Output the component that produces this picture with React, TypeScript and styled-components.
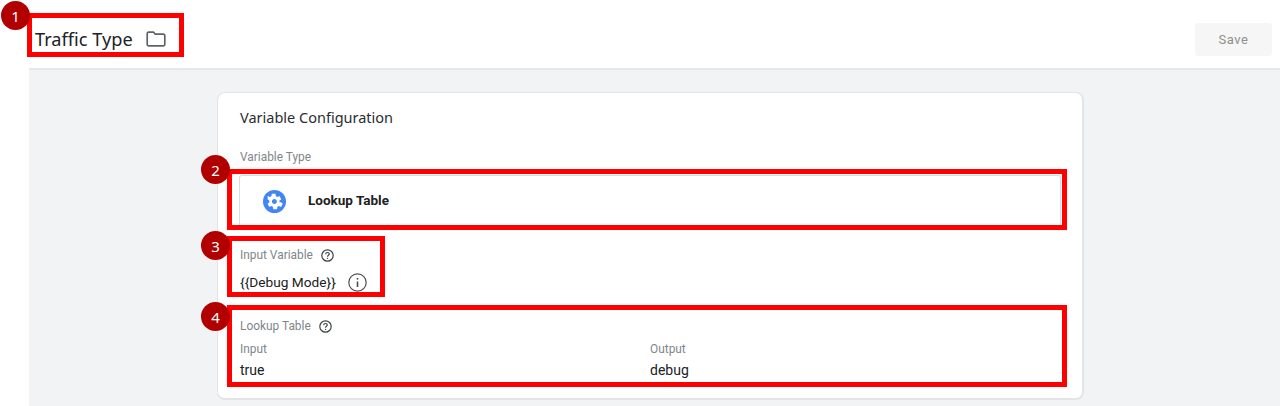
import React from 'react';
import styled, { createGlobalStyle } from 'styled-components';

const GlobalStyle = createGlobalStyle`
  html, body {
    margin: 0;
    padding: 0;
    background: #ffffff;
    font-family: Roboto, "Liberation Sans", sans-serif;
  }
`;

const Page = styled.div`
  position: relative;
  width: 1280px;
  height: 406px;
  overflow: hidden;
  background: #ffffff;
`;

const Header = styled.header`
  display: flex;
  align-items: center;
  justify-content: space-between;
  box-sizing: border-box;
  height: 70px;
  margin-left: 29px;
  padding: 10px 8px 0 6px;
  border-bottom: 2px solid #e6e7e8;
`;

const TitleGroup = styled.div`
  display: flex;
  align-items: center;
  gap: 13px;
`;

const Title = styled.h1`
  margin: 0;
  font-family: "Noto Sans", sans-serif;
  font-size: 18.2px;
  font-weight: 400;
  color: #202124;
`;

const SaveButton = styled.button`
  width: 77px;
  height: 33px;
  border: none;
  border-radius: 3px;
  background: #f6f6f6;
  color: #8f8f8f;
  font-family: Roboto, sans-serif;
  font-size: 13px;
  font-weight: 400;
  letter-spacing: 0.5px;
`;

const Content = styled.main`
  box-sizing: border-box;
  height: 336px;
  margin-left: 29px;
  padding: 22px 0 0 188px;
  background: #f1f3f4;
`;

const Card = styled.section`
  box-sizing: border-box;
  width: 867px;
  height: 308px;
  padding: 15px 21px 0 22px;
  border: 1px solid #e3e4e6;
  border-width: 1px 2px 2px 1px;
  border-radius: 8px;
  background: #ffffff;
`;

const CardTitle = styled.h2`
  margin: 0;
  font-family: "Noto Sans", sans-serif;
  font-size: 14.5px;
  line-height: 19px;
  font-weight: 400;
  color: #2b2d30;
`;

const FieldLabel = styled.div`
  display: flex;
  align-items: center;
  gap: 8px;
  font-size: 11.9px;
  line-height: 14px;
  color: #80868b;
`;

const TypeSection = styled.div`
  margin-top: 23px;
`;

const TypeRow = styled.div`
  display: flex;
  align-items: center;
  gap: 22px;
  box-sizing: border-box;
  height: 52px;
  margin: 11px 0 0 -1px;
  padding: 0 0 0 23px;
  border: 1px solid #dadce0;
  border-bottom: none;
  border-radius: 3px 3px 0 0;
`;

const TypeName = styled.span`
  margin-bottom: 3px;
  font-size: 13.5px;
  font-weight: 700;
  color: #202124;
`;

const InputSection = styled.div`
  margin-top: 21px;
`;

const VariableValue = styled.div`
  display: flex;
  align-items: center;
  gap: 12px;
  margin-top: 10px;
  font-size: 13.7px;
  line-height: 20px;
  color: #202124;
`;

const LookupSection = styled.div`
  margin-top: 27px;
`;

const TableGrid = styled.div`
  display: grid;
  grid-template-columns: 410px 1fr;
  margin-top: 9px;
`;

const ColumnHead = styled.div`
  font-size: 11.9px;
  line-height: 14px;
  color: #80868b;
`;

const ColumnCell = styled.div`
  margin-top: 6px;
  font-size: 14px;
  line-height: 17px;
  color: #202124;
`;

const Highlight = styled.div<{ $x: number; $y: number; $w: number; $h: number }>`
  position: absolute;
  box-sizing: border-box;
  left: ${({ $x }) => $x}px;
  top: ${({ $y }) => $y}px;
  width: ${({ $w }) => $w}px;
  height: ${({ $h }) => $h}px;
  border: 5px solid #ff0000;
`;

const Badge = styled.div<{ $x: number; $y: number }>`
  position: absolute;
  left: ${({ $x }) => $x}px;
  top: ${({ $y }) => $y}px;
  width: 29px;
  height: 29px;
  border-radius: 50%;
  background: #b00000;
  color: #ffffff;
  display: flex;
  align-items: center;
  justify-content: center;
  font-family: "Noto Sans", sans-serif;
  font-size: 15px;
`;

const FolderIcon = () => (
  <svg width="20" height="16" viewBox="0 0 20 16" fill="none" stroke="#5f6368" strokeWidth="1.7">
    <path d="M1.2 3V13.5C1.2 14.2 1.8 14.8 2.5 14.8H17.5C18.2 14.8 18.8 14.2 18.8 13.5V4.5C18.8 3.8 18.2 3.2 17.5 3.2H9.3L7.5 1.2H2.5C1.8 1.2 1.2 1.8 1.2 2.5Z" />
  </svg>
);

const GearBadge = () => (
  <svg width="23" height="23" viewBox="0 0 24 24">
    <circle cx="12" cy="12" r="12" fill="#4285f4" />
    <path
      fill="#ffffff"
      d="M17.1 12.8c0-.3.1-.5.1-.8s0-.5-.1-.8l1.7-1.3c.2-.1.2-.3.1-.5l-1.6-2.8c-.1-.2-.3-.2-.5-.2l-2 .8c-.4-.3-.9-.6-1.4-.8l-.3-2.1c0-.2-.2-.3-.4-.3h-3.2c-.2 0-.4.1-.4.3l-.3 2.1c-.5.2-1 .5-1.4.8l-2-.8c-.2-.1-.4 0-.5.2L4.9 9.4c-.1.2-.1.4.1.5l1.7 1.3c0 .3-.1.5-.1.8s0 .5.1.8L5 14.1c-.2.1-.2.3-.1.5l1.6 2.8c.1.2.3.2.5.2l2-.8c.4.3.9.6 1.4.8l.3 2.1c0 .2.2.3.4.3h3.2c.2 0 .4-.1.4-.3l.3-2.1c.5-.2 1-.5 1.4-.8l2 .8c.2.1.4 0 .5-.2l1.6-2.8c.1-.2.1-.4-.1-.5l-1.7-1.3zM11.9 14.6c-1.4 0-2.6-1.2-2.6-2.6s1.2-2.6 2.6-2.6 2.6 1.2 2.6 2.6-1.2 2.6-2.6 2.6z"
    />
  </svg>
);

const HelpIcon = () => (
  <svg width="13" height="13" viewBox="0 0 13 13" fill="none" stroke="#3f4245" strokeWidth="1.2">
    <circle cx="6.5" cy="6.5" r="5.7" />
    <path d="M4.7 5.2C4.7 4.2 5.5 3.5 6.5 3.5S8.3 4.2 8.3 5.1C8.3 6.3 6.5 6.3 6.5 7.7" />
    <path d="M6.5 8.8V9.9" />
  </svg>
);

const InfoIcon = () => (
  <svg width="19" height="19" viewBox="0 0 19 19" fill="none" stroke="#4a4d50">
    <circle cx="9.5" cy="9.5" r="8.7" strokeWidth="1.2" />
    <path d="M9.5 8.5V14" strokeWidth="1.6" />
    <path d="M9.5 5V6.6" strokeWidth="1.6" />
  </svg>
);

const highlights = [
  { x: 27, y: 13, w: 157, h: 44 },
  { x: 227, y: 169, w: 840, h: 61 },
  { x: 227, y: 236, w: 158, h: 61 },
  { x: 227, y: 305, w: 840, h: 82 },
];

const badges = [
  { x: 1, y: 1, label: '1' },
  { x: 201, y: 155, label: '2' },
  { x: 201, y: 231, label: '3' },
  { x: 201, y: 302, label: '4' },
];

export default function App() {
  return (
    <Page>
      <GlobalStyle />
      <Header>
        <TitleGroup>
          <Title>Traffic Type</Title>
          <FolderIcon />
        </TitleGroup>
        <SaveButton disabled>Save</SaveButton>
      </Header>
      <Content>
        <Card>
          <CardTitle>Variable Configuration</CardTitle>
          <TypeSection>
            <FieldLabel>Variable Type</FieldLabel>
            <TypeRow>
              <GearBadge />
              <TypeName>Lookup Table</TypeName>
            </TypeRow>
          </TypeSection>
          <InputSection>
            <FieldLabel>
              Input Variable
              <HelpIcon />
            </FieldLabel>
            <VariableValue>
              {'{{Debug Mode}}'}
              <InfoIcon />
            </VariableValue>
          </InputSection>
          <LookupSection>
            <FieldLabel>
              Lookup Table
              <HelpIcon />
            </FieldLabel>
            <TableGrid>
              <div>
                <ColumnHead>Input</ColumnHead>
                <ColumnCell>true</ColumnCell>
              </div>
              <div>
                <ColumnHead>Output</ColumnHead>
                <ColumnCell>debug</ColumnCell>
              </div>
            </TableGrid>
          </LookupSection>
        </Card>
      </Content>
      {highlights.map((h) => (
        <Highlight key={`${h.x}-${h.y}`} $x={h.x} $y={h.y} $w={h.w} $h={h.h} />
      ))}
      {badges.map((b) => (
        <Badge key={b.label} $x={b.x} $y={b.y}>
          {b.label}
        </Badge>
      ))}
    </Page>
  );
}
